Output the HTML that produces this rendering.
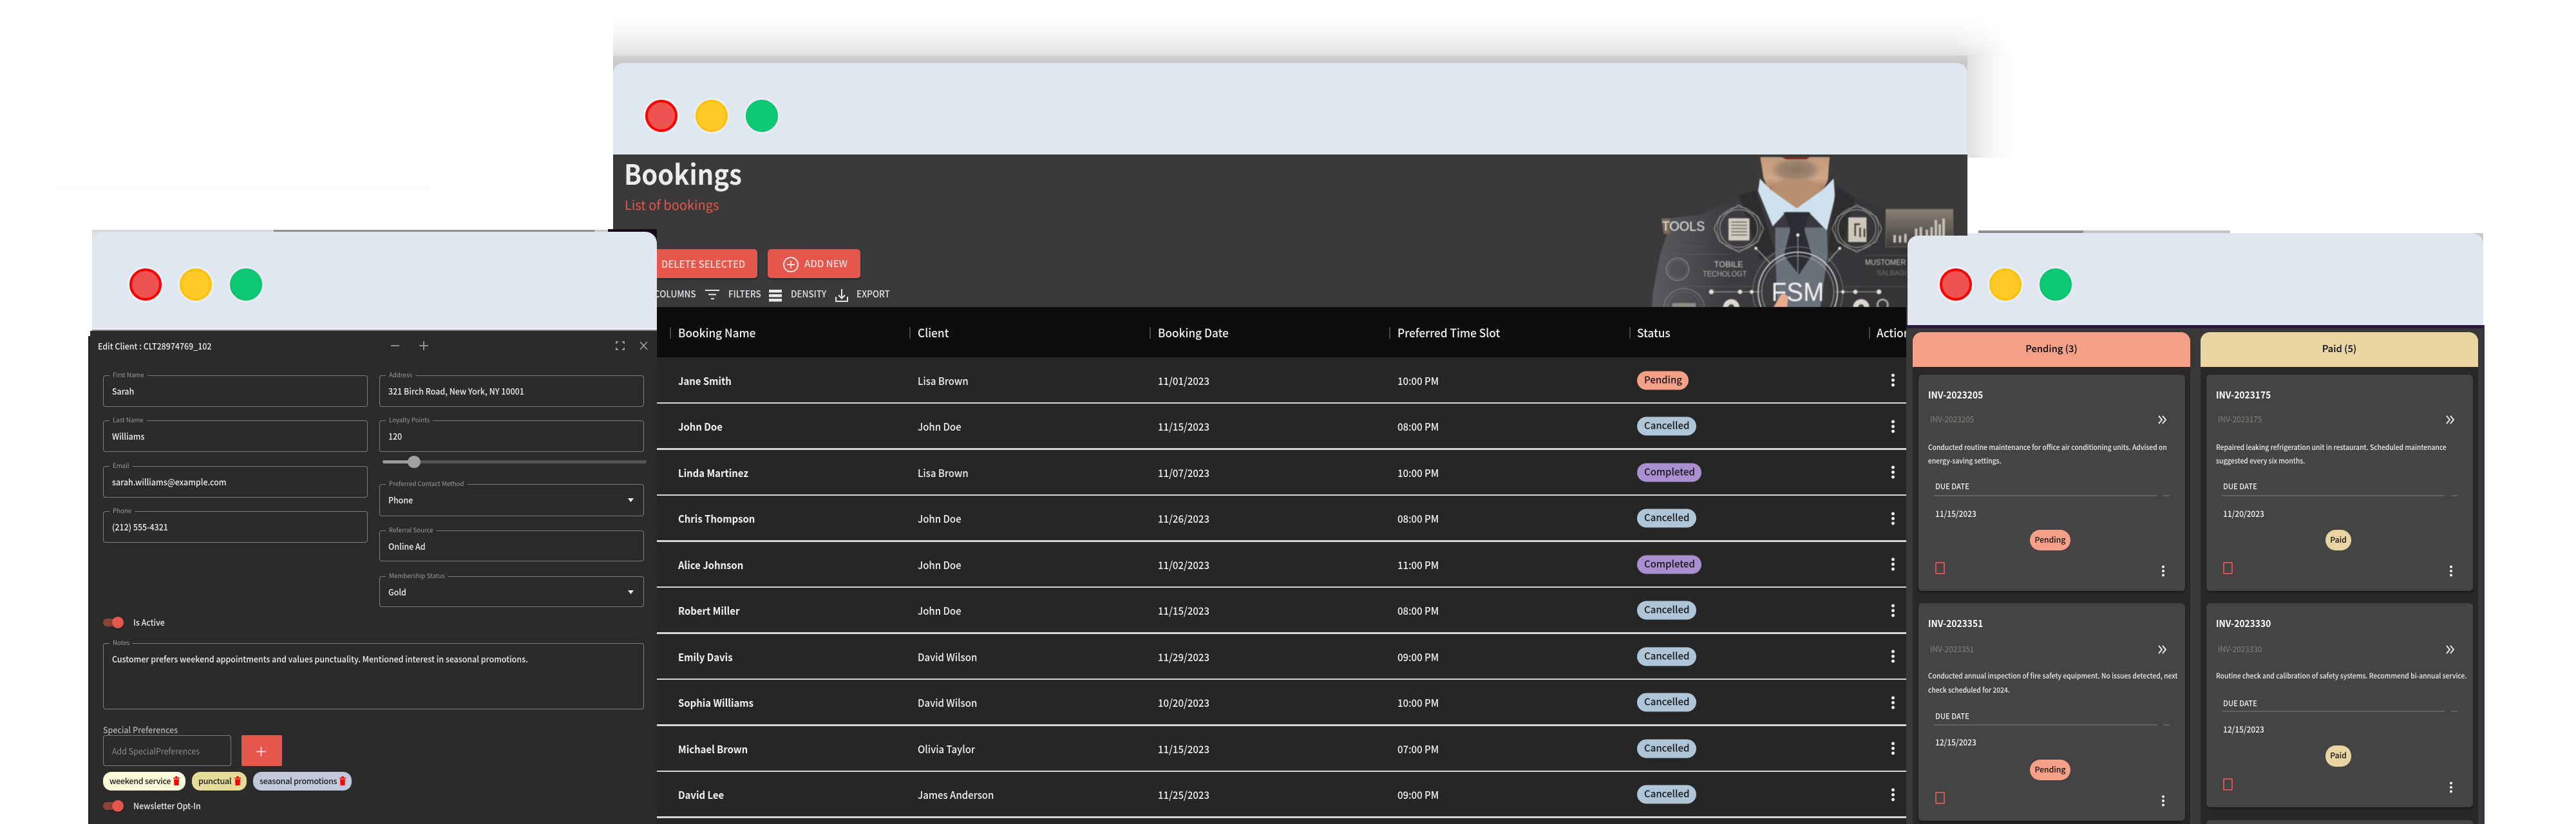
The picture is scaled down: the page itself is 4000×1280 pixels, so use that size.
<!DOCTYPE html>
<html><head><meta charset="utf-8"><title>Bookings</title>
<style>
*{box-sizing:border-box;margin:0;padding:0}
html,body{width:4000px;height:1280px;background:#fff;overflow:hidden}
body{position:relative;font-family:"Noto Sans CJK JP","Liberation Sans",sans-serif}
.a{position:absolute}
.t{position:absolute;white-space:nowrap;line-height:24px;transform:translateY(-50%)}
.sx{transform:translateY(-50%) scaleX(.92);transform-origin:left center}
.dot{position:absolute;width:50px;height:50px;border-radius:50%;transform:translate(-50%,-50%)}
.dr{background:#ef5350;border:4px solid #f00;box-shadow:0 0 0 3px #e6f4fa}
.dy{background:#ffca28;border:3px solid #ffc107;box-shadow:0 0 0 3px #e6f0fa}
.dg{background:#0dc975;border:3px solid #0cc56e;box-shadow:0 0 0 3px #eaeaf8}
.r{position:absolute;left:1020px;width:1940px;height:71.5px;background:#262626}
.r span{position:absolute;top:35.5px;transform:translateY(-50%) scaleX(.92);transform-origin:left center;white-space:nowrap;line-height:24px;color:#f0f0f0;font-size:16.3px;font-weight:500}
.r .n{left:33px;font-weight:700;color:#f2f2f2;font-size:16.2px}
.r .c{left:405px}.r .d{left:778px}.r .p{left:1150px}
.r .st{left:1522px;height:29px;line-height:28px;padding:0 0 0 11px;border-radius:15px;color:#161616;font-size:15px;font-weight:500;transform:translateY(-50%)}
.r .st.pe{width:79.5px}.r .st.ca{width:92px}.r .st.co{width:100px}
.pe{background:#f6a088}.ca{background:#aec6d8}.co{background:#a98fd0}.pa{background:#ead5a2}
.k{position:absolute;width:5px;height:5px;border-radius:50%;background:#f2f2f2;box-shadow:0 -7.5px 0 #f2f2f2,0 7.5px 0 #f2f2f2}
.r .k{left:1916.5px;top:33px;transform:none;padding:0}
.li{position:absolute;left:1020px;width:1940px;height:2.5px;background:#d6d6d6}
.hd{position:absolute;top:517px;transform:translateY(-50%) scaleX(.955);transform-origin:left center;font-size:18px;line-height:24px;color:#f2f2f2;font-weight:500;white-space:nowrap}
.sp{position:absolute;top:508px;width:2px;height:18px;background:#444}
.f{position:absolute;border:1.5px solid #7d7d7d;border-radius:4px;width:411px;height:49px;background:#2b2b2b}
.f label{position:absolute;left:9px;top:-9px;font-size:9.7px;line-height:14px;padding:0 5px;background:#2b2b2b;color:#9a9a9a;white-space:nowrap}
.f span{position:absolute;left:13px;top:11px;font-size:13.5px;font-weight:500;line-height:24px;color:#eee;white-space:nowrap;transform:scaleX(.92);transform-origin:left center}
.f svg{position:absolute;right:15px;top:21px}
.tg{position:absolute;left:160px;width:29px;height:12px;border-radius:6px;background:#8b4339}
.tg i{position:absolute;right:-3px;top:-3px;width:18px;height:18px;border-radius:50%;background:#e5574d;box-shadow:0 1px 2px rgba(0,0,0,.5)}
.chip{position:absolute;top:1199px;height:29px;border-radius:13px;color:#202020;font-size:12.6px;letter-spacing:-.3px;font-weight:500;line-height:27px;white-space:nowrap;padding-left:10px}
.chip svg{position:absolute;top:7px}
.colh{position:absolute;top:516px;width:431px;height:54px;border-radius:14px 14px 0 0;color:#000;text-align:center;line-height:52px;font-size:14.800px;font-weight:500}
.colb{position:absolute;top:570px;width:431px;height:710px;background:#282828}
.card{position:absolute;width:414.5px;background:#444;border-radius:6px;box-shadow:0 2px 3px rgba(0,0,0,.45)}
.card .x{position:absolute;white-space:nowrap;transform:translateY(-50%) scaleX(.92);transform-origin:left center;line-height:20px}
.ti{left:15px;font-size:15px;font-weight:700;color:#fff}
.su{left:18px;font-size:12.8px;color:#85807a}
.de{left:15px;font-size:11.2px;font-weight:500;color:#eee}
.du{left:26px;font-size:12.2px;color:#eee;font-weight:500}
.da{left:26px;font-size:13px;font-weight:500;color:#f6f6f6}
.hr{position:absolute;height:2px;background:#626262}
.pl{position:absolute;border-radius:16px;color:#111;font-size:12.2px;font-weight:500;text-align:center}
.del{position:absolute;left:26.5px;width:15px;height:19px;border:2px solid #d9534f;border-radius:2px}
.card .k{left:378px;width:4px;height:4px;box-shadow:0 -6.5px 0 #f2f2f2,0 6.5px 0 #f2f2f2}
.card svg{position:absolute;left:371px}
.tbt{position:absolute;top:457px;transform:translateY(-50%) scaleX(.93);transform-origin:left center;font-size:14.500px;font-weight:500;color:#dfe4ea;line-height:20px;white-space:nowrap}
</style></head><body>

<!-- faint shadow top-left -->
<div class="a" style="left:89px;top:267px;width:577px;height:30px;background:linear-gradient(#fff,#fbfbfb)"></div>

<!-- main window shadow -->
<div class="a" style="left:952px;top:0;width:2173px;height:86px;background:linear-gradient(#fff 0%,#fff 20%,#fafafa 50%,#efefef 78%,#e0e0e0 100%);-webkit-mask-image:linear-gradient(90deg,#000 96%,transparent 100%)"></div>
<div class="a" style="left:952px;top:86px;width:2103px;height:12px;background:linear-gradient(#d4d4d4,#c8c8c8)"></div>
<div class="a" style="left:3055px;top:86px;width:70px;height:159px;background:linear-gradient(90deg,#e0e0e0,#f6f6f6 55%,#fff)"></div>
<div class="a" style="left:952px;top:98px;width:16px;height:16px;background:#c9c9c9"></div>
<div class="a" style="left:3039px;top:98px;width:16px;height:16px;background:#c9c9c9"></div>

<!-- main window -->
<div class="a" style="left:952px;top:98px;width:2103px;height:142px;background:#e0e7f0;border-radius:16px 16px 0 0"></div>
<div class="dot dr" style="left:1027px;top:180px"></div>
<div class="dot dy" style="left:1105px;top:180px"></div>
<div class="dot dg" style="left:1183px;top:180px"></div>
<div class="a" style="left:952px;top:240px;width:2103px;height:1040px;background:#3a3a3a"></div>

<div class="t" style="left:969px;top:269px;font-size:43px;line-height:60px;font-weight:700;color:#ececec;transform:translateY(-50%) scaleX(.93);transform-origin:left center">Bookings</div>
<div class="t" style="left:970px;top:318px;font-size:20px;line-height:28px;color:#e5574d">List of bookings</div>

<div class="a" style="left:980px;top:387px;width:196px;height:45px;background:#e5574d;border-radius:5px;box-shadow:0 2px 3px rgba(0,0,0,.35)"></div>
<div class="t" style="left:1027px;top:410px;font-size:15.5px;font-weight:500;color:#f3dfd9;transform:translateY(-50%) scaleX(.955);transform-origin:left center">DELETE SELECTED</div>
<div class="a" style="left:1192px;top:387px;width:144px;height:45px;background:#e5574d;border-radius:5px;box-shadow:0 2px 3px rgba(0,0,0,.35)"></div>
<svg class="a" style="left:1215px;top:398px" width="26" height="26" viewBox="0 0 26 26" fill="none" stroke="#f3e6e2" stroke-width="2"><circle cx="13" cy="13" r="11"/><path d="M13 7v12M7 13h12"/></svg>
<div class="t" style="left:1249px;top:410px;font-size:15px;font-weight:500;color:#f3dfd9">ADD NEW</div>

<div class="tbt" style="left:1016px">COLUMNS</div>
<svg class="a" style="left:1094px;top:449px" width="24" height="18" viewBox="0 0 24 18" fill="none" stroke="#e4e4e4" stroke-width="2"><path d="M1 2h22M6 8.5h12M10 15h5"/></svg>
<div class="tbt" style="left:1131px">FILTERS</div>
<svg class="a" style="left:1194px;top:449px" width="21" height="20" viewBox="0 0 21 20" fill="#e8e8e8"><rect y="1" width="20" height="4.5"/><rect y="8" width="20" height="4.5"/><rect y="15" width="20" height="4.5"/></svg>
<div class="tbt" style="left:1228px">DENSITY</div>
<svg class="a" style="left:1296px;top:448px" width="22" height="22" viewBox="0 0 22 22" fill="none" stroke="#e8e8e8" stroke-width="2"><path d="M11 1v14M6 10.500l5 5 5-5M2 13v7h18v-7"/></svg>
<div class="tbt" style="left:1330px">EXPORT</div>

<!-- hero illustration -->
<svg class="a" style="left:2560px;top:240px;filter:blur(.8px)" width="500" height="237" viewBox="0 0 1500 711">
<defs>
<linearGradient id="su" x1="0" x2="1"><stop offset="0" stop-color="#5a5b60"/><stop offset=".3" stop-color="#3c3c40"/><stop offset="1" stop-color="#343437"/></linearGradient>
<linearGradient id="sk" x1="0" x2="0" y1="0" y2="1"><stop offset="0" stop-color="#c09a7c"/><stop offset=".55" stop-color="#d0a888"/><stop offset="1" stop-color="#8f6549"/></linearGradient>
<linearGradient id="ch" x1="0" x2="0" y1="0" y2="1"><stop offset="0" stop-color="#8a7f72"/><stop offset="1" stop-color="#3c3b3b"/></linearGradient>
<radialGradient id="bd"><stop offset="0" stop-color="#8a7562"/><stop offset=".65" stop-color="#927c68" stop-opacity=".75"/><stop offset="1" stop-color="#a88d73" stop-opacity="0"/></radialGradient>
</defs>
<path d="M520 12H843L835 120 800 190H570L535 110Z" fill="url(#sk)"/>
<ellipse cx="685" cy="72" rx="125" ry="62" fill="url(#bd)"/>
<path d="M620 12H750L735 22H640Z" fill="#7a2a22"/>
<path d="M510 150 430 200 240 280 70 300 85 370 50 480 20 640 15 711H1205V300L1100 250 960 200 870 135 690 260Z" fill="url(#su)"/>
<path d="M590 340H830L835 460 800 711H600L590 460Z" fill="#69717a"/>
<path d="M518 112 570 165 690 250 810 165 862 112 868 200 830 355 745 268H640L578 335 510 170Z" fill="#cfe1ee"/>
<path d="M570 165 690 250 810 165 760 120H620Z" fill="#b8906f"/>
<path d="M628 270H752L725 350 760 470 700 560 630 470 660 350Z" fill="#2b2d34"/>
<path d="M500 165 590 450 520 490 420 190ZM872 150 835 460 900 440 960 200Z" fill="#2d2d30"/>

<g fill="none" stroke="#b4b1aa">
<path d="M420 235 510 290 535 345 510 405 420 455 330 405 305 345 330 290Z" stroke-width="3"/>
<circle cx="420" cy="345" r="88" stroke-width="3"/>
<circle cx="420" cy="345" r="100" stroke-width="2"/>
<path d="M970 235 1060 290 1085 345 1060 405 970 455 880 405 855 345 880 290Z" stroke-width="3"/>
<circle cx="970" cy="345" r="88" stroke-width="3"/>
<circle cx="970" cy="345" r="100" stroke-width="2"/>
<path d="M500 437 565 505M890 437 835 500" stroke-width="4"/>
<path d="M695 375V555" stroke-width="3"/>
<circle cx="695" cy="640" r="185" stroke-width="5" stroke="#dcdcdc"/>
<circle cx="695" cy="640" r="168" stroke-width="3"/>
<circle cx="695" cy="640" r="210" stroke-width="3" stroke="#807f7d"/>
<circle cx="135" cy="535" r="52" stroke-width="4" stroke="#8f8c87"/>
<circle cx="135" cy="535" r="42" stroke-width="2" stroke="#777"/>
<circle cx="165" cy="720" r="95" stroke-width="3" stroke="#8f8c87"/>
<circle cx="165" cy="720" r="80" stroke-width="2" stroke="#777"/>
<path d="M290 640H520M870 640H1075" stroke-width="3"/>
<path d="M80 430H270M60 465H380M40 615H500M1010 470H1205M900 615H1205" stroke="#5f5d59" stroke-width="2"/>
<circle cx="1090" cy="700" r="24" stroke-width="8"/>
</g>
<rect x="372" y="297" width="98" height="104" rx="5" fill="#d0ccc0"/>
<path d="M385 315H458M385 330H458M385 345H458M385 360H458M385 375H458" stroke="#5a5650" stroke-width="4"/>
<rect x="930" y="293" width="85" height="115" fill="#cfc8ba"/>
<path d="M962 380V325L985 325M985 385V340M1005 385V345" stroke="#3c3835" stroke-width="7" fill="none"/>
<rect x="1105" y="255" width="313" height="175" fill="url(#ch)" stroke="#847a6e" stroke-width="2"/>
<g fill="#c6c0b6"><rect x="1140" y="375" width="12" height="35"/><rect x="1165" y="378" width="12" height="32"/><rect x="1190" y="370" width="12" height="40"/><rect x="1240" y="345" width="12" height="65"/><rect x="1262" y="338" width="12" height="72"/><rect x="1290" y="350" width="12" height="60"/><rect x="1312" y="338" width="12" height="72"/><rect x="1332" y="305" width="12" height="105"/><rect x="1350" y="325" width="12" height="85"/><rect x="1368" y="298" width="12" height="112"/></g>
<g fill="#e6e2da"><circle cx="695" cy="375" r="8"/><circle cx="500" cy="437" r="7"/><circle cx="890" cy="437" r="7"/><circle cx="292" cy="640" r="11"/><circle cx="426" cy="640" r="10"/><circle cx="480" cy="640" r="9"/><circle cx="905" cy="640" r="8"/><circle cx="963" cy="640" r="10"/><circle cx="1073" cy="640" r="11"/></g>
<g fill="#ddd8cf"><circle cx="385" cy="712" r="38"/><circle cx="990" cy="712" r="38"/></g>
<g fill="#3a3a3c"><circle cx="385" cy="712" r="14"/><circle cx="990" cy="712" r="14"/></g>
<rect x="110" y="692" width="110" height="19" fill="#8f8c86"/>
<path d="M60 298H100V370H70Z" fill="#7b6a57"/>
<text x="62" y="355" font-family="Liberation Sans" font-size="64" fill="#f0eee9" textLength="200" lengthAdjust="spacingAndGlyphs">TOOLS</text>
<text x="305" y="525" font-family="Liberation Sans" font-size="40" fill="#d5d2cb" textLength="135" lengthAdjust="spacingAndGlyphs">TOBILE</text>
<text x="252" y="568" font-family="Liberation Sans" font-size="36" fill="#b8b4ab" textLength="205" lengthAdjust="spacingAndGlyphs">TECHOLOGT</text>
<text x="1008" y="515" font-family="Liberation Sans" font-size="36" fill="#cfccc5" textLength="190" lengthAdjust="spacingAndGlyphs">MUSTOMER</text>
<text x="1062" y="562" font-family="Liberation Sans" font-size="32" fill="#7d6f63" textLength="140" lengthAdjust="spacingAndGlyphs">SALBAGI</text>
<text x="572" y="682" font-family="Liberation Sans" font-size="122" fill="#f4f4f4" textLength="245" lengthAdjust="spacingAndGlyphs">FSM</text>
<path d="M582 711 615 655Q635 640 650 665L645 711Z" fill="#e8ab90"/>
</svg>

<!-- grid header -->
<div class="a" style="left:1020px;top:477px;width:1940px;height:78px;background:#0d0d0d"></div>
<div class="sp" style="left:1040px"></div><div class="hd" style="left:1053px">Booking Name</div>
<div class="sp" style="left:1412px"></div><div class="hd" style="left:1425px">Client</div>
<div class="sp" style="left:1785px"></div><div class="hd" style="left:1798px">Booking Date</div>
<div class="sp" style="left:2157px"></div><div class="hd" style="left:2170px">Preferred Time Slot</div>
<div class="sp" style="left:2530px"></div><div class="hd" style="left:2542px">Status</div>
<div class="sp" style="left:2902px"></div><div class="hd" style="left:2914px">Actions</div>

<!-- rows -->
<div class="r" style="top:555px"><span class="n">Jane Smith</span><span class="c">Lisa Brown</span><span class="d">11/01/2023</span><span class="p">10:00 PM</span><span class="st pe">Pending</span><span class="k"></span></div>
<div class="r" style="top:626.5px"><span class="n">John Doe</span><span class="c">John Doe</span><span class="d">11/15/2023</span><span class="p">08:00 PM</span><span class="st ca">Cancelled</span><span class="k"></span></div>
<div class="r" style="top:698px"><span class="n">Linda Martinez</span><span class="c">Lisa Brown</span><span class="d">11/07/2023</span><span class="p">10:00 PM</span><span class="st co">Completed</span><span class="k"></span></div>
<div class="r" style="top:769.500px"><span class="n">Chris Thompson</span><span class="c">John Doe</span><span class="d">11/26/2023</span><span class="p">08:00 PM</span><span class="st ca">Cancelled</span><span class="k"></span></div>
<div class="r" style="top:841px"><span class="n">Alice Johnson</span><span class="c">John Doe</span><span class="d">11/02/2023</span><span class="p">11:00 PM</span><span class="st co">Completed</span><span class="k"></span></div>
<div class="r" style="top:912.500px"><span class="n">Robert Miller</span><span class="c">John Doe</span><span class="d">11/15/2023</span><span class="p">08:00 PM</span><span class="st ca">Cancelled</span><span class="k"></span></div>
<div class="r" style="top:984px"><span class="n">Emily Davis</span><span class="c">David Wilson</span><span class="d">11/29/2023</span><span class="p">09:00 PM</span><span class="st ca">Cancelled</span><span class="k"></span></div>
<div class="r" style="top:1055.500px"><span class="n">Sophia Williams</span><span class="c">David Wilson</span><span class="d">10/20/2023</span><span class="p">10:00 PM</span><span class="st ca">Cancelled</span><span class="k"></span></div>
<div class="r" style="top:1127px"><span class="n">Michael Brown</span><span class="c">Olivia Taylor</span><span class="d">11/15/2023</span><span class="p">07:00 PM</span><span class="st ca">Cancelled</span><span class="k"></span></div>
<div class="r" style="top:1198.500px"><span class="n">David Lee</span><span class="c">James Anderson</span><span class="d">11/25/2023</span><span class="p">09:00 PM</span><span class="st ca">Cancelled</span><span class="k"></span></div>
<div class="a" style="left:1020px;top:1270px;width:1940px;height:10px;background:#262626"></div>
<div class="li" style="top:624.500px"></div><div class="li" style="top:696px"></div><div class="li" style="top:767.500px"></div><div class="li" style="top:839px"></div><div class="li" style="top:910.500px"></div><div class="li" style="top:982px"></div><div class="li" style="top:1053.500px"></div><div class="li" style="top:1125px"></div><div class="li" style="top:1196.500px"></div><div class="li" style="top:1268px"></div>

<!-- LEFT WINDOW -->
<div class="a" style="left:143px;top:357px;width:282px;height:4px;background:#d8d8d8"></div>
<div class="a" style="left:425px;top:357px;width:498px;height:4px;background:#8e8e8e"></div>
<div class="a" style="left:923px;top:357px;width:21px;height:4px;background:#c8c8c8"></div>
<div class="a" style="left:143px;top:360px;width:20px;height:20px;background:#dedede"></div>
<div class="a" style="left:944px;top:356px;width:76px;height:5px;background:#150b18"></div>
<div class="a" style="left:1000px;top:358px;width:20px;height:20px;background:#150b18"></div>
<div class="a" style="left:143px;top:360px;width:877px;height:154px;background:#e0e7f0;border-radius:18px 18px 0 0"></div>
<div class="a" style="left:143px;top:510px;width:877px;height:2px;background:#f4f7fa"></div>
<div class="a" style="left:143px;top:512px;width:877px;height:2px;background:#8a8a8a"></div>
<div class="dot dr" style="left:226px;top:442px"></div>
<div class="dot dy" style="left:304px;top:442px"></div>
<div class="dot dg" style="left:382px;top:442px"></div>
<div class="a" style="left:137px;top:522px;width:3px;height:758px;background:#2a1a30"></div>
<div class="a" style="left:140px;top:514px;width:880px;height:766px;background:#2b2b2b"></div>

<div class="t sx" style="left:152px;top:537px;font-size:13.500px;font-weight:500;color:#eee">Edit Client : CLT28974769_102</div>
<svg class="a" style="left:605px;top:529px" width="60" height="16" viewBox="0 0 60 16" fill="none" stroke="#8f8f8f" stroke-width="2"><path d="M2 8H15M46 8H60M53 1V15"/></svg>
<svg class="a" style="left:956px;top:530px" width="14" height="14" viewBox="0 0 14 14" fill="none" stroke="#a8a8a8" stroke-width="1.800"><path d="M1 4V1H4M10 1H13V4M13 10V13H10M4 13H1V10"/></svg>
<svg class="a" style="left:993px;top:530px" width="13" height="14" viewBox="0 0 13 14" fill="none" stroke="#a8a8a8" stroke-width="1.500"><path d="M1 1 12 13M12 1 1 13"/></svg>

<div class="f" style="left:160px;top:583px"><label>First Name</label><span>Sarah</span></div>
<div class="f" style="left:160px;top:653px"><label>Last Name</label><span>Williams</span></div>
<div class="f" style="left:160px;top:724px"><label>Email</label><span>sarah.williams@example.com</span></div>
<div class="f" style="left:160px;top:794px"><label>Phone</label><span>(212) 555-4321</span></div>
<div class="f" style="left:589px;top:583px"><label>Address</label><span>321 Birch Road, New York, NY 10001</span></div>
<div class="f" style="left:589px;top:653px"><label>Loyalty Points</label><span>120</span></div>
<div class="a" style="left:594px;top:714.500px;width:410px;height:5px;border-radius:3px;background:#555"></div>
<div class="a" style="left:594px;top:714.500px;width:49px;height:5px;border-radius:3px;background:#9a9a9a"></div>
<div class="a" style="left:633px;top:708px;width:20px;height:19px;border-radius:50%;background:#a0a0a0"></div>
<div class="f" style="left:589px;top:752px;height:50px"><label>Preferred Contact Method</label><span>Phone</span><svg width="9" height="6" viewBox="0 0 9 6"><path d="M0 0H9L4.500 6Z" fill="#eee"/></svg></div>
<div class="f" style="left:589px;top:824px;height:48px"><label>Referral Source</label><span>Online Ad</span></div>
<div class="f" style="left:589px;top:895px;height:48px"><label>Membership Status</label><span>Gold</span><svg width="9" height="6" viewBox="0 0 9 6"><path d="M0 0H9L4.500 6Z" fill="#eee"/></svg></div>

<div class="tg" style="top:961px"><i></i></div>
<div class="t sx" style="left:207px;top:966px;font-size:13.500px;font-weight:500;color:#e8e8e8">Is Active</div>

<div class="f" style="left:160px;top:999px;width:840px;height:103px"><label>Notes</label><span>Customer prefers weekend appointments and values punctuality. Mentioned interest in seasonal promotions.</span></div>

<div class="t sx" style="left:160px;top:1133px;font-size:13.500px;color:#b0b0b0;font-weight:500">Special Preferences</div>
<div class="f" style="left:160px;top:1142px;width:199px;height:48px"><span style="top:11px;color:#8a8a8a;font-weight:400">Add SpecialPreferences</span></div>
<div class="a" style="left:375px;top:1142px;width:63px;height:48px;background:#e5574d;border-radius:2px"></div>
<svg class="a" style="left:398px;top:1160px" width="15" height="15" viewBox="0 0 15 15" stroke="#f0e0dc" stroke-width="1.800"><path d="M7.500 0V15M0 7.500H15"/></svg>

<div class="chip" style="left:160px;width:128px;background:#fbfbd9">weekend service<svg style="left:109px" width="10" height="14" viewBox="0 0 10 14" fill="#f00"><path d="M0 2H3L3.500 0H6.500L7 2H10V3.500H0ZM1 4.500H9L8.500 14H1.500Z"/></svg></div>
<div class="chip" style="left:298px;width:85px;background:#e5dc9a">punctual<svg style="left:66px" width="10" height="14" viewBox="0 0 10 14" fill="#f00"><path d="M0 2H3L3.500 0H6.500L7 2H10V3.500H0ZM1 4.500H9L8.500 14H1.500Z"/></svg></div>
<div class="chip" style="left:393px;width:153px;background:#c2c9dc">seasonal promotions<svg style="left:134px" width="10" height="14" viewBox="0 0 10 14" fill="#f00"><path d="M0 2H3L3.500 0H6.500L7 2H10V3.500H0ZM1 4.500H9L8.500 14H1.500Z"/></svg></div>

<div class="tg" style="top:1246px"><i></i></div>
<div class="t sx" style="left:207px;top:1251px;font-size:13.500px;font-weight:500;color:#e8e8e8">Newsletter Opt-In</div>

<!-- RIGHT WINDOW -->
<div class="a" style="left:3072px;top:358px;width:163px;height:4px;background:#8e8e8e"></div>
<div class="a" style="left:3235px;top:358px;width:228px;height:4px;background:#c4c4c4"></div>
<div class="a" style="left:3835px;top:362px;width:21px;height:20px;background:#c9c9c9"></div>
<div class="a" style="left:3055px;top:362px;width:800.500px;height:143px;background:#e0e7f0;border-radius:0 18px 0 0"></div>
<div class="a" style="left:2962px;top:366px;width:120px;height:139px;background:#e0e7f0;border-radius:16px 0 0 0"></div>
<div class="dot dr" style="left:3037px;top:442px"></div>
<div class="dot dy" style="left:3114px;top:442px"></div>
<div class="dot dg" style="left:3192px;top:442px"></div>
<div class="a" style="left:2960px;top:505px;width:898px;height:5px;background:#2a1b3d"></div>
<div class="a" style="left:2960px;top:510px;width:898px;height:770px;background:#383838"></div>
<div class="a" style="left:3856px;top:505px;width:2px;height:775px;background:#3a2a5a"></div>

<div class="colb" style="left:2970px"></div>
<div class="colb" style="left:3417px"></div>
<div class="colh pe" style="left:2970px">Pending (3)</div>
<div class="colh pa" style="left:3417px">Paid (5)</div>

<!-- Pending card 1 -->
<div class="card" style="left:2978.500px;top:582px;height:336px">
<div class="x ti" style="top:32px">INV-2023205</div>
<div class="x su" style="top:69px">INV-2023205</div>
<svg style="top:63px" width="15" height="14" viewBox="0 0 15 14" fill="none" stroke="#f2f2f2" stroke-width="1.800"><path d="M2 1 7 7 2 13M8 1 13 7 8 13"/></svg>
<div class="x de" style="top:113px">Conducted routine maintenance for office air conditioning units. Advised on</div>
<div class="x de" style="top:134px">energy-saving settings.</div>
<div class="x du" style="top:173px">DUE DATE</div>
<div class="hr" style="top:187px;left:24.500px;width:346px"></div><div class="hr" style="top:187px;left:380px;width:10px"></div>
<div class="x da" style="top:216px">11/15/2023</div>
<div class="pl pe" style="left:173.500px;top:241px;width:63px;height:32px;line-height:30px">Pending</div>
<div class="del" style="top:291px"></div>
<div class="k" style="top:303px"></div>
</div>
<!-- Pending card 2 -->
<div class="card" style="left:2978.500px;top:937px;height:338px">
<div class="x ti" style="top:32px">INV-2023351</div>
<div class="x su" style="top:71px">INV-2023351</div>
<svg style="top:65px" width="15" height="14" viewBox="0 0 15 14" fill="none" stroke="#f2f2f2" stroke-width="1.800"><path d="M2 1 7 7 2 13M8 1 13 7 8 13"/></svg>
<div class="x de" style="top:113px">Conducted annual inspection of fire safety equipment. No issues detected, next</div>
<div class="x de" style="top:135px">check scheduled for 2024.</div>
<div class="x du" style="top:175px">DUE DATE</div>
<div class="hr" style="top:188px;left:24.500px;width:346px"></div><div class="hr" style="top:188px;left:380px;width:10px"></div>
<div class="x da" style="top:216px">12/15/2023</div>
<div class="pl pe" style="left:173.500px;top:243px;width:63px;height:32px;line-height:30px">Pending</div>
<div class="del" style="top:293px"></div>
<div class="k" style="top:305px"></div>
</div>
<!-- Paid card 1 -->
<div class="card" style="left:3425.500px;top:582px;height:336px">
<div class="x ti" style="top:32px">INV-2023175</div>
<div class="x su" style="top:69px">INV-2023175</div>
<svg style="top:63px" width="15" height="14" viewBox="0 0 15 14" fill="none" stroke="#f2f2f2" stroke-width="1.800"><path d="M2 1 7 7 2 13M8 1 13 7 8 13"/></svg>
<div class="x de" style="top:113px">Repaired leaking refrigeration unit in restaurant. Scheduled maintenance</div>
<div class="x de" style="top:134px">suggested every six months.</div>
<div class="x du" style="top:173px">DUE DATE</div>
<div class="hr" style="top:187px;left:24.500px;width:346px"></div><div class="hr" style="top:187px;left:380px;width:10px"></div>
<div class="x da" style="top:216px">11/20/2023</div>
<div class="pl pa" style="left:185.500px;top:241px;width:40px;height:32px;line-height:30px">Paid</div>
<div class="del" style="top:291px"></div>
<div class="k" style="top:303px"></div>
</div>
<!-- Paid card 2 -->
<div class="card" style="left:3425.500px;top:937px;height:317px">
<div class="x ti" style="top:32px">INV-2023330</div>
<div class="x su" style="top:71px">INV-2023330</div>
<svg style="top:65px" width="15" height="14" viewBox="0 0 15 14" fill="none" stroke="#f2f2f2" stroke-width="1.800"><path d="M2 1 7 7 2 13M8 1 13 7 8 13"/></svg>
<div class="x de" style="top:113px">Routine check and calibration of safety systems. Recommend bi-annual service.</div>
<div class="x du" style="top:155px">DUE DATE</div>
<div class="hr" style="top:167px;left:24.500px;width:346px"></div><div class="hr" style="top:167px;left:380px;width:10px"></div>
<div class="x da" style="top:196px">12/15/2023</div>
<div class="pl pa" style="left:185.500px;top:221px;width:40px;height:33px;line-height:31px">Paid</div>
<div class="del" style="top:272px"></div>
<div class="k" style="top:284px"></div>
</div>
<div class="card" style="left:3425.500px;top:1274px;height:6px;border-radius:6px 6px 0 0"></div>

</body></html>
